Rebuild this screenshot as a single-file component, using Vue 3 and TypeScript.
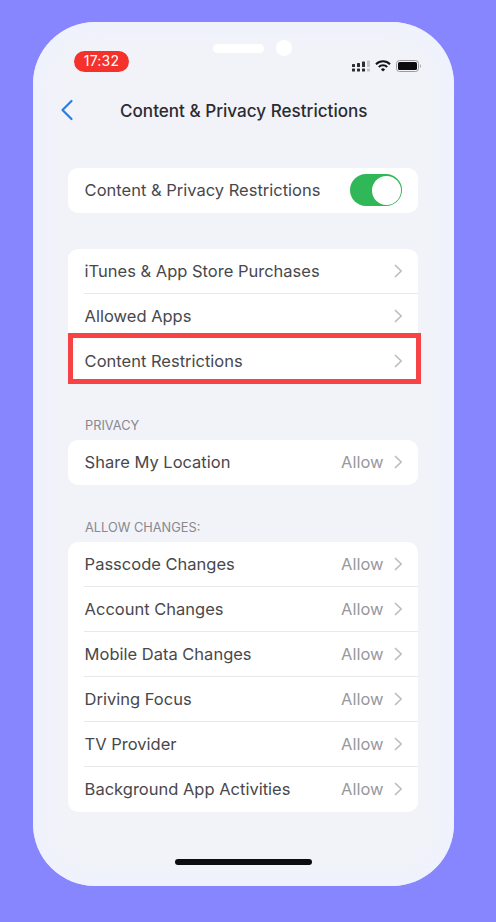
<script setup lang="ts">
interface Row { label: string; value?: string; highlight?: boolean }
const storeRows: Row[] = [
  { label: 'iTunes & App Store Purchases' },
  { label: 'Allowed Apps' },
  { label: 'Content Restrictions', highlight: true },
]
const privacyRows: Row[] = [{ label: 'Share My Location', value: 'Allow' }]
const changeRows: Row[] = [
  { label: 'Passcode Changes', value: 'Allow' },
  { label: 'Account Changes', value: 'Allow' },
  { label: 'Mobile Data Changes', value: 'Allow' },
  { label: 'Driving Focus', value: 'Allow' },
  { label: 'TV Provider', value: 'Allow' },
  { label: 'Background App Activities', value: 'Allow' },
]
const groups = [
  { title: '', rows: storeRows, cls: 'plain' },
  { title: 'PRIVACY', rows: privacyRows, cls: 'privacy' },
  { title: 'ALLOW CHANGES:', rows: changeRows, cls: 'changes' },
]
</script>

<template>
  <div class="page">
    <div class="phone">
      <div class="sensors">
        <span class="speaker"></span>
        <span class="camera"></span>
      </div>
      <div class="status">
        <span class="time">17:32</span>
        <div class="indicators">
          <svg width="18" height="12" viewBox="0 0 18 12">
            <g fill="#2c2c30">
              <rect x="0" y="4" width="3" height="3" rx="0.6" /><rect x="0" y="8.5" width="3" height="3" rx="0.6" />
              <rect x="5" y="3" width="3" height="4" rx="0.6" /><rect x="5" y="8.5" width="3" height="3" rx="0.6" />
              <rect x="10" y="1.5" width="3" height="5.5" rx="0.6" /><rect x="10" y="8.5" width="3" height="3" rx="0.6" />
            </g>
            <g fill="#c4c5ca">
              <rect x="15" y="0.5" width="3" height="6.5" rx="0.6" /><rect x="15" y="8.5" width="3" height="3" rx="0.6" />
            </g>
          </svg>
          <svg width="16" height="12" viewBox="0 0 16 12">
            <path d="M1 4.2 A10 10 0 0 1 15 4.2" fill="none" stroke="#141416" stroke-width="2" />
            <path d="M3.8 7 A6 6 0 0 1 12.2 7" fill="none" stroke="#141416" stroke-width="2" />
            <path d="M8 11.6 L5.9 9.4 A3 3 0 0 1 10.1 9.4 Z" fill="#141416" />
          </svg>
          <svg width="26" height="12" viewBox="0 0 26 12">
            <rect x="0.5" y="0.5" width="22" height="11" rx="3" fill="none" stroke="#9a9aa0" />
            <rect x="2" y="2" width="19" height="8" rx="1.6" fill="#0c0c0e" />
            <path d="M24 4.2 C25.2 4.6 25.2 7.4 24 7.8 Z" fill="#9a9aa0" />
          </svg>
        </div>
      </div>

      <header class="nav">
        <svg class="back" width="14" height="22" viewBox="0 0 14 22">
          <path d="M11.5 2 L2.5 11 L11.5 20" fill="none" stroke="#2a7de1" stroke-width="2.2" stroke-linecap="round" stroke-linejoin="round" />
        </svg>
        <h1 class="title">Content &amp; Privacy Restrictions</h1>
      </header>

      <div class="card master">
        <div class="row">
          <span class="label">Content &amp; Privacy Restrictions</span>
          <span class="toggle"><span class="knob"></span></span>
        </div>
      </div>

      <section v-for="group in groups" :key="group.cls" class="group" :class="group.cls">
        <div v-if="group.title" class="caption">{{ group.title }}</div>
        <div class="card">
          <div v-for="(row, i) in group.rows" :key="row.label" class="row">
            <span class="label">{{ row.label }}</span>
            <span v-if="row.value" class="value">{{ row.value }}</span>
            <svg class="chevron" width="9" height="14" viewBox="0 0 9 14">
              <path d="M1.5 1.5 L7.2 7 L1.5 12.5" fill="none" stroke="#bcbcc1" stroke-width="1.7" stroke-linecap="round" stroke-linejoin="round" />
            </svg>
            <span v-if="i < group.rows.length - 1 && !group.rows[i + 1].highlight" class="divider"></span>
            <span v-if="row.highlight" class="highlight"></span>
          </div>
        </div>
      </section>

      <div class="home"></div>
    </div>
  </div>
</template>

<style>
html, body { margin: 0; background: #8886ff; }
</style>

<style scoped>
.page {
  width: 496px;
  height: 922px;
  box-sizing: border-box;
  padding: 22px 42px 36px 33px;
  background: #8886ff;
  overflow: hidden;
  font-family: Inter, "Liberation Sans", sans-serif;
}
.phone {
  position: relative;
  width: 421px;
  height: 864px;
  box-sizing: border-box;
  padding: 0 36px 0 35px;
  border-radius: 62px;
  background: #f1f3f9;
  box-shadow: inset 0 0 24px 6px #eef2fe;
}
.sensors {
  display: flex;
  align-items: center;
  justify-content: center;
  gap: 12px;
  height: 16px;
  padding-top: 18px;
  padding-left: 18px;
}
.speaker { width: 51px; height: 9px; border-radius: 5px; background: #fff; }
.camera { width: 16px; height: 16px; border-radius: 50%; background: #fff; }
.status {
  display: flex;
  align-items: center;
  justify-content: space-between;
  height: 21px;
  margin: -5px -4px 0 6px;
}
.time {
  width: 55px;
  height: 21px;
  border-radius: 11px;
  background: #f5312b;
  color: #fff;
  font-size: 14px;
  line-height: 20px;
  text-align: center;
  letter-spacing: 0.2px;
}
.indicators { display: flex; align-items: center; gap: 5px; margin-top: 9px; }
.nav {
  position: relative;
  display: flex;
  align-items: center;
  height: 38px;
  margin-top: 19px;
}
.back { margin-left: -8px; }
.title {
  position: absolute;
  left: 52px;
  margin: 0;
  font-size: 17.1px;
  font-weight: 500;
  color: #2b2c31;
  white-space: nowrap;
}
.card {
  background: #fff;
  border-radius: 10px;
}
.master { margin-top: 39px; }
.group { margin-top: 36px; }
.group.privacy { margin-top: 34px; }
.group.changes { margin-top: 35px; }
.caption {
  height: 16px;
  margin: 0 0 6px 17px;
  color: #88888d;
  font-size: 12.8px;
  line-height: 16px;
}
.row {
  position: relative;
  display: flex;
  align-items: center;
  box-sizing: border-box;
  height: 45px;
  padding: 0 16px 1px 16.6px;
  color: #48484c;
}
.label {
  flex: 1;
  font-size: 16.5px;
  white-space: nowrap;
}
.value {
  margin-right: 10px;
  color: #98989d;
  font-size: 16.5px;
}
.chevron { margin-right: -0.5px; }
.divider {
  position: absolute;
  left: 16px;
  right: 0;
  bottom: 0;
  height: 1px;
  background: #e8e8ec;
}
.toggle {
  position: relative;
  width: 52px;
  height: 32px;
  border-radius: 16px;
  background: #30b858;
}
.knob {
  position: absolute;
  top: 1.5px;
  right: 1.5px;
  width: 29px;
  height: 29px;
  border-radius: 50%;
  background: #fff;
}
.highlight {
  position: absolute;
  left: 0;
  right: -3px;
  top: -6px;
  bottom: 0;
  border: 5px solid #f64346;
  pointer-events: none;
}
.home {
  position: absolute;
  left: 142px;
  bottom: 21px;
  width: 137px;
  height: 6px;
  border-radius: 3px;
  background: #0b0b12;
}
</style>
